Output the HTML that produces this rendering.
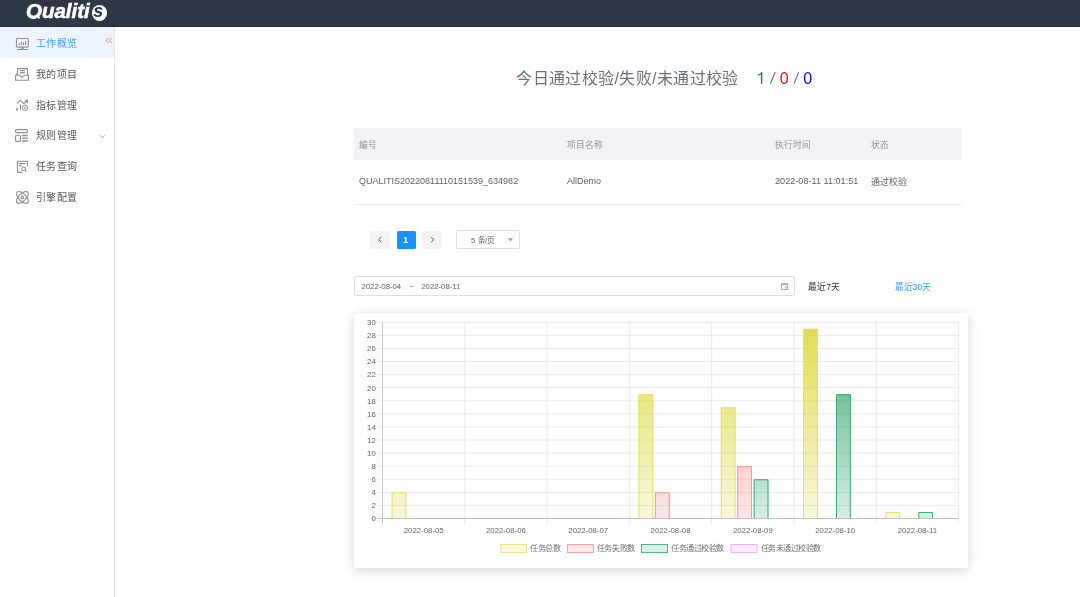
<!DOCTYPE html>
<html lang="zh-CN"><head><meta charset="utf-8">
<style>
*{margin:0;padding:0;box-sizing:border-box}
html,body{width:1080px;height:597px;overflow:hidden;background:#fff;font-family:"Liberation Sans",sans-serif;position:relative}
.a{position:absolute;white-space:nowrap}
.mt{position:absolute;left:36px;font-size:10px;letter-spacing:0.4px;color:#58595c}
.th{position:absolute;font-size:8.75px;color:#909399;top:137.7px}
.td{position:absolute;font-size:9px;color:#606266;top:176.3px}
svg text{font-family:"Liberation Sans",sans-serif}
.tk{font-size:7.8px;fill:#666}
.lg{font-size:7.5px;fill:#707070}
</style></head><body><div style="position:absolute;left:0;top:0;width:1080px;height:597px;will-change:transform;background:#fff">
<div class="a" style="left:0;top:0;width:1080px;height:27px;background:#2e3844;border-bottom:1px solid #252d38"></div>
<div class="a" style="left:20px;top:0;width:80px;height:18.6px;overflow:hidden"><div class="a" style="left:6px;top:-1px;font-size:20.5px;font-weight:bold;font-style:italic;color:#fff;-webkit-text-stroke:0.6px #fff">Qualiti</div></div>
<svg class="a" style="left:30px;top:10px" width="14" height="12" viewBox="30 10 14 12"><path d="M36.4 14.6L39.4 18.4" stroke="#fff" stroke-width="2.2"/></svg>
<div class="a" style="left:91.5px;top:5px;width:15.5px;height:16px;border-radius:50%;background:#fff"></div>
<div class="a" style="left:93.3px;top:0.5px;font-size:18px;font-weight:bold;font-style:italic;color:#2e3844">s</div>

<div class="a" style="left:0;top:27px;width:114px;height:30.8px;background:#eef5fe"></div>
<div class="a" style="left:114px;top:27px;width:1px;height:570px;background:#e2e4e8"></div>
<div class="a" style="left:104px;top:31.5px;width:10px;height:17px;background:#f1f2f4;border-radius:2px 0 0 2px"></div>
<svg class="a" style="left:0;top:0" width="120" height="220" viewBox="0 0 120 220">
 <path d="M108.6 38L106.3 40.5L108.6 43M111.8 38L109.5 40.5L111.8 43" fill="none" stroke="#9a9a9a" stroke-width="0.9"/>
 <path d="M100.1 135.3L102.4 137.5L104.7 135.3" fill="none" stroke="#a0a0a0" stroke-width="0.9"/>
 
<g fill="none" stroke="#8f8f8f" stroke-width="1.1">
 <rect x="16.5" y="38.5" width="11.8" height="8.6" rx="1"/>
 <path d="M19.3 45V43.2M21.4 45V41.6M23.5 45V42.2M25.6 45V41M21.5 47.2V49M23.3 47.2V49M17 49.5H28"/>
 <path d="M17.4 74.5V68.6H27.4V74.5M20 70.6H24.9M20 72.6H24.9M15.6 75.3V80.3H28.4V75.3H24.4L22 77.3L19.6 75.3ZM15.6 75.3L17.4 73.5M28.4 75.3L27.4 74"/>
 <path d="M17 103.5L20.4 100.2L23.7 103.5L26.6 101.2M20.5 104.6V110.6"/>
 <path d="M27.6 100.2l-1.8 .2 1.6 1.6z" fill="#8f8f8f"/>
 <path d="M17 107.8V110.8" stroke-width="1.4"/><circle cx="24.9" cy="107.7" r="2.7" stroke-width="1"/><circle cx="24.9" cy="107.7" r="0.9" stroke-width="0.7"/>
 <rect x="15.6" y="129.6" width="12" height="3" rx="1"/>
 <rect x="15.6" y="135.2" width="4.8" height="6.2" rx="1"/>
 <path d="M22.1 135.5H27.8M22.1 138.2H27.8M22.1 141H27.8" stroke-width="1.3"/>
 <path d="M27.4 166.6V161.2H17.5V172.4H22.4M19 163.5H25.6M19 165.6H21.6M19 168.3H19.6"/>
 <circle cx="23.6" cy="168.9" r="1.9"/><path d="M25 170.3L26.6 171.7"/>
 <ellipse cx="22.4" cy="197.4" rx="7.6" ry="3.6" transform="rotate(45 22.4 197.4)"/>
 <ellipse cx="22.4" cy="197.4" rx="7.6" ry="3.6" transform="rotate(-45 22.4 197.4)"/>
 <circle cx="22.4" cy="197.4" r="1.3"/>
</g>
</svg>
<div class="mt" style="top:35.0px;color:#409eff">工作概览</div>
<div class="mt" style="top:65.8px">我的项目</div>
<div class="mt" style="top:96.6px">指标管理</div>
<div class="mt" style="top:127.4px">规则管理</div>
<div class="mt" style="top:158.2px">任务查询</div>
<div class="mt" style="top:189.0px">引擎配置</div>

<div class="a" style="left:516.3px;top:65.3px;font-size:16px;letter-spacing:0.36px;color:#687382">今日通过校验/失败/未通过校验</div>
<svg class="a" style="left:750px;top:65px" width="60" height="25" viewBox="750 65 60 25"><path d="M762.3 83.8V72.1H761.3Q760.7 74.2 757.8 74.6V75.6Q760 75.5 760.9 74.6V83.8Z" fill="#11852a"/><path d="M770.4 83.8L775.2 72M794 83.8L798.8 72" stroke="#687382" stroke-width="1.05"/></svg>

<div class="a" style="left:779.7px;top:70px;font-size:16px;color:#ff0d0d">0</div>

<div class="a" style="left:803.3px;top:70px;font-size:16px;color:#0d0dff">0</div>

<div class="a" style="left:354px;top:128px;width:608px;height:32px;background:#f2f3f6"></div>
<div class="a" style="left:354px;top:203.5px;width:608px;height:1px;background:#ebeef5"></div>
<div class="th" style="left:359px">编号</div><div class="th" style="left:567px">项目名称</div><div class="th" style="left:775px">执行时间</div><div class="th" style="left:871px">状态</div>
<div class="td" style="left:359px">QUALITIS20220811110151539_634982</div><div class="td" style="left:567px">AllDemo</div><div class="td" style="left:775px;font-size:9.15px">2022-08-11 11:01:51</div><div class="td" style="left:871px;top:174.6px">通过校验</div>

<div class="a" style="left:370px;top:231.3px;width:20px;height:17.5px;background:#f4f4f5;border-radius:1.5px"></div>
<div class="a" style="left:396.7px;top:231.3px;width:19px;height:17.5px;background:#1890ff;border-radius:1.5px"></div>
<div class="a" style="left:422.3px;top:231.3px;width:20px;height:17.5px;background:#f4f4f5;border-radius:1.5px"></div>
<svg class="a" style="left:360px;top:225px" width="100" height="30" viewBox="360 225 100 30">
 <path d="M381.3 237.1L378.6 239.7L381.3 242.3" fill="none" stroke="#5a5a5a" stroke-width="1"/>
 <path d="M431.1 237.1L433.8 239.7L431.1 242.3" fill="none" stroke="#5a5a5a" stroke-width="1"/>
</svg>
<div class="a" style="left:403.2px;top:235px;font-size:9px;font-weight:bold;color:#fff">1</div>
<div class="a" style="left:456.3px;top:230.3px;width:63.5px;height:18.5px;border:1px solid #dcdfe6;border-radius:2px"></div>
<div class="a" style="left:471px;top:233.6px;font-size:7.5px;letter-spacing:0.25px;color:#606266">5 条/页</div>
<svg class="a" style="left:500px;top:230px" width="20" height="20" viewBox="500 230 20 20"><path d="M507.8 238.3H513.2L510.5 241.2Z" fill="#959aa3"/></svg>

<div class="a" style="left:354px;top:276.2px;width:441px;height:20px;border:1px solid #dcdfe6;border-radius:2px"></div>
<div class="a" style="left:361.5px;top:281.8px;font-size:7.75px;color:#606266">2022-08-04</div>
<svg class="a" style="left:405px;top:280px" width="12" height="12" viewBox="405 280 12 12"><path d="M409.8 286.8q0.8 -1 1.6 -0.3t1.6 -0.3" fill="none" stroke="#707378" stroke-width="0.7"/></svg>
<div class="a" style="left:421.3px;top:281.8px;font-size:7.75px;color:#606266">2022-08-11</div>
<svg class="a" style="left:775px;top:278px" width="20" height="16" viewBox="775 278 20 16">
 <rect x="781.6" y="284" width="6" height="5.5" fill="none" stroke="#a8b0bc" stroke-width="1"/>
 <rect x="781.1" y="283.4" width="7" height="1.6" fill="#a8b0bc"/>
 <rect x="785.2" y="286.6" width="1.4" height="1.8" fill="#a8b0bc"/>
</svg>
<div class="a" style="left:808.3px;top:280px;font-size:8.75px;color:#303133">最近7天</div>
<div class="a" style="left:894.6px;top:280px;font-size:8.75px;color:#409eff">最近30天</div>

<div class="a" style="left:354px;top:313px;width:614px;height:255px;border-radius:3px;background:#fff;box-shadow:0 2px 12px rgba(0,0,0,0.17)"></div>
<svg class="a" style="left:0;top:0" width="1080" height="597" viewBox="0 0 1080 597">
<defs>
<linearGradient id="g0" gradientUnits="userSpaceOnUse" x1="0" y1="322.3" x2="0" y2="518.5"><stop offset="0" stop-color="#dcd632" stop-opacity="0.86"/><stop offset="1" stop-color="#dcd632" stop-opacity="0.17"/></linearGradient>
<linearGradient id="g1" gradientUnits="userSpaceOnUse" x1="0" y1="322.3" x2="0" y2="518.5"><stop offset="0" stop-color="#fa7878" stop-opacity="0.75"/><stop offset="1" stop-color="#fa7878" stop-opacity="0.18"/></linearGradient>
<linearGradient id="g2" gradientUnits="userSpaceOnUse" x1="0" y1="322.3" x2="0" y2="518.5"><stop offset="0" stop-color="#28a064" stop-opacity="0.9"/><stop offset="1" stop-color="#28a064" stop-opacity="0.18"/></linearGradient>
<linearGradient id="g3" gradientUnits="userSpaceOnUse" x1="0" y1="322.3" x2="0" y2="518.5"><stop offset="0" stop-color="#f080f0" stop-opacity="0.6"/><stop offset="1" stop-color="#f080f0" stop-opacity="0.15"/></linearGradient>
</defs>
<line x1="376.5" y1="322.30" x2="958.60" y2="322.30" stroke="#ebebeb" stroke-width="1"/>
<line x1="376.5" y1="335.38" x2="958.60" y2="335.38" stroke="#ebebeb" stroke-width="1"/>
<line x1="376.5" y1="348.46" x2="958.60" y2="348.46" stroke="#ebebeb" stroke-width="1"/>
<line x1="376.5" y1="361.54" x2="958.60" y2="361.54" stroke="#ebebeb" stroke-width="1"/>
<line x1="376.5" y1="374.62" x2="958.60" y2="374.62" stroke="#ebebeb" stroke-width="1"/>
<line x1="376.5" y1="387.70" x2="958.60" y2="387.70" stroke="#ebebeb" stroke-width="1"/>
<line x1="376.5" y1="400.78" x2="958.60" y2="400.78" stroke="#ebebeb" stroke-width="1"/>
<line x1="376.5" y1="413.86" x2="958.60" y2="413.86" stroke="#ebebeb" stroke-width="1"/>
<line x1="376.5" y1="426.94" x2="958.60" y2="426.94" stroke="#ebebeb" stroke-width="1"/>
<line x1="376.5" y1="440.02" x2="958.60" y2="440.02" stroke="#ebebeb" stroke-width="1"/>
<line x1="376.5" y1="453.10" x2="958.60" y2="453.10" stroke="#ebebeb" stroke-width="1"/>
<line x1="376.5" y1="466.18" x2="958.60" y2="466.18" stroke="#ebebeb" stroke-width="1"/>
<line x1="376.5" y1="479.26" x2="958.60" y2="479.26" stroke="#ebebeb" stroke-width="1"/>
<line x1="376.5" y1="492.34" x2="958.60" y2="492.34" stroke="#ebebeb" stroke-width="1"/>
<line x1="376.5" y1="505.42" x2="958.60" y2="505.42" stroke="#ebebeb" stroke-width="1"/>
<line x1="464.80" y1="322.3" x2="464.80" y2="524.5" stroke="#ebebeb" stroke-width="1"/>
<line x1="547.10" y1="322.3" x2="547.10" y2="524.5" stroke="#ebebeb" stroke-width="1"/>
<line x1="629.40" y1="322.3" x2="629.40" y2="524.5" stroke="#ebebeb" stroke-width="1"/>
<line x1="711.70" y1="322.3" x2="711.70" y2="524.5" stroke="#ebebeb" stroke-width="1"/>
<line x1="794.00" y1="322.3" x2="794.00" y2="524.5" stroke="#ebebeb" stroke-width="1"/>
<line x1="876.30" y1="322.3" x2="876.30" y2="524.5" stroke="#ebebeb" stroke-width="1"/>
<line x1="958.60" y1="322.3" x2="958.60" y2="524.5" stroke="#ebebeb" stroke-width="1"/>
<rect x="391.55" y="492.34" width="14.81" height="26.16" fill="url(#g0)"/>
<path d="M392.05 519.00 V492.84 H405.87 V519.00" fill="none" stroke="#e6e070" stroke-width="1"/>
<rect x="638.45" y="394.24" width="14.81" height="124.26" fill="url(#g0)"/>
<path d="M638.95 519.00 V394.74 H652.77 V519.00" fill="none" stroke="#e6e070" stroke-width="1"/>
<rect x="654.91" y="492.34" width="14.81" height="26.16" fill="url(#g1)"/>
<path d="M655.41 519.00 V492.84 H669.23 V519.00" fill="none" stroke="#f59898" stroke-width="1"/>
<rect x="720.75" y="407.32" width="14.81" height="111.18" fill="url(#g0)"/>
<path d="M721.25 519.00 V407.82 H735.07 V519.00" fill="none" stroke="#e6e070" stroke-width="1"/>
<rect x="737.21" y="466.18" width="14.81" height="52.32" fill="url(#g1)"/>
<path d="M737.71 519.00 V466.68 H751.53 V519.00" fill="none" stroke="#f59898" stroke-width="1"/>
<rect x="753.67" y="479.26" width="14.81" height="39.24" fill="url(#g2)"/>
<path d="M754.17 519.00 V479.76 H767.99 V519.00" fill="none" stroke="#3aab70" stroke-width="1"/>
<rect x="803.05" y="328.84" width="14.81" height="189.66" fill="url(#g0)"/>
<path d="M803.55 519.00 V329.34 H817.37 V519.00" fill="none" stroke="#e6e070" stroke-width="1"/>
<rect x="835.97" y="394.24" width="14.81" height="124.26" fill="url(#g2)"/>
<path d="M836.47 519.00 V394.74 H850.29 V519.00" fill="none" stroke="#3aab70" stroke-width="1"/>
<rect x="885.35" y="511.96" width="14.81" height="6.54" fill="url(#g0)"/>
<path d="M885.85 519.00 V512.46 H899.67 V519.00" fill="none" stroke="#e6e070" stroke-width="1"/>
<rect x="918.27" y="511.96" width="14.81" height="6.54" fill="url(#g2)"/>
<path d="M918.77 519.00 V512.46 H932.59 V519.00" fill="none" stroke="#3aab70" stroke-width="1"/>
<line x1="382.5" y1="322.3" x2="382.5" y2="524.5" stroke="#c8c8c8" stroke-width="1"/>
<line x1="376.5" y1="518.5" x2="958.60" y2="518.5" stroke="#c0c0c0" stroke-width="1"/>
<text x="375.8" y="325.10" text-anchor="end" class="tk">30</text>
<text x="375.8" y="338.18" text-anchor="end" class="tk">28</text>
<text x="375.8" y="351.26" text-anchor="end" class="tk">26</text>
<text x="375.8" y="364.34" text-anchor="end" class="tk">24</text>
<text x="375.8" y="377.42" text-anchor="end" class="tk">22</text>
<text x="375.8" y="390.50" text-anchor="end" class="tk">20</text>
<text x="375.8" y="403.58" text-anchor="end" class="tk">18</text>
<text x="375.8" y="416.66" text-anchor="end" class="tk">16</text>
<text x="375.8" y="429.74" text-anchor="end" class="tk">14</text>
<text x="375.8" y="442.82" text-anchor="end" class="tk">12</text>
<text x="375.8" y="455.90" text-anchor="end" class="tk">10</text>
<text x="375.8" y="468.98" text-anchor="end" class="tk">8</text>
<text x="375.8" y="482.06" text-anchor="end" class="tk">6</text>
<text x="375.8" y="495.14" text-anchor="end" class="tk">4</text>
<text x="375.8" y="508.22" text-anchor="end" class="tk">2</text>
<text x="375.8" y="521.30" text-anchor="end" class="tk">0</text>
<text x="423.65" y="532.8" text-anchor="middle" class="tk">2022-08-05</text>
<text x="505.95" y="532.8" text-anchor="middle" class="tk">2022-08-06</text>
<text x="588.25" y="532.8" text-anchor="middle" class="tk">2022-08-07</text>
<text x="670.55" y="532.8" text-anchor="middle" class="tk">2022-08-08</text>
<text x="752.85" y="532.8" text-anchor="middle" class="tk">2022-08-09</text>
<text x="835.15" y="532.8" text-anchor="middle" class="tk">2022-08-10</text>
<text x="917.45" y="532.8" text-anchor="middle" class="tk">2022-08-11</text>
<rect x="500.7" y="544.5" width="26" height="8" fill="#f9f8e0" stroke="#e9e48a" stroke-width="1"/>
<text x="530.2" y="551.3" class="lg" textLength="30.1" lengthAdjust="spacingAndGlyphs">任务总数</text>
<rect x="567.4" y="544.5" width="26" height="8" fill="#fde8e8" stroke="#f6a6a6" stroke-width="1"/>
<text x="596.9" y="551.3" class="lg" textLength="37.7" lengthAdjust="spacingAndGlyphs">任务失败数</text>
<rect x="641.5" y="544.5" width="26" height="8" fill="#daf0e4" stroke="#55b585" stroke-width="1"/>
<text x="671" y="551.3" class="lg" textLength="52.9" lengthAdjust="spacingAndGlyphs">任务通过校验数</text>
<rect x="731.0" y="544.5" width="26" height="8" fill="#fdeefd" stroke="#f2b0f2" stroke-width="1"/>
<text x="760.5" y="551.3" class="lg" textLength="60.5" lengthAdjust="spacingAndGlyphs">任务未通过校验数</text>
</svg>
</div></body></html>
